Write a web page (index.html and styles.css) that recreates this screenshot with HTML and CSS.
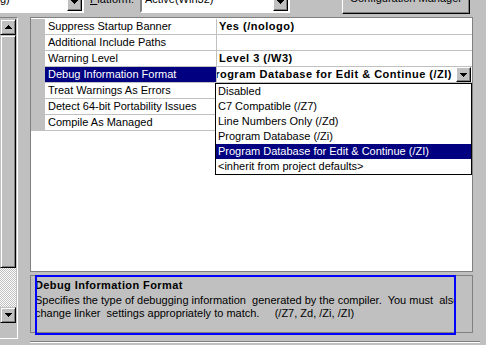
FILE: index.html
```html
<!DOCTYPE html>
<html lang="en">
<head>
    <meta charset="UTF-8">
    <title>C/C++ General Property Page</title>
    <link rel="stylesheet" href="styles.css">
</head>
<body>
    <div class="top">
        <div class="combo combo-cfg">
            <div class="field">Active(Debug)</div>
            <div class="dd-btn"><svg width="7" height="4"><path d="M0 0h7v1h-1v1h-1v1h-1v1h-1v-1h-1v-1h-1v-1h-1z"/></svg></div>
        </div>
        <label class="lbl"><u>P</u>latform:</label>
        <div class="combo combo-plat">
            <div class="field">Active(Win32)</div>
            <div class="dd-btn"><svg width="7" height="4"><path d="M0 0h7v1h-1v1h-1v1h-1v1h-1v-1h-1v-1h-1v-1h-1z"/></svg></div>
        </div>
        <button class="btn">Configuration Manager</button>
    </div>

    <div class="main">
        <div class="side">
            <div class="tree">
                <div class="vscroll">
                    <div class="sb-btn"><svg width="7" height="4"><path d="M3 0h1v1h1v1h1v1h1v1h-7v-1h1v-1h1v-1h1z"/></svg></div>
                    <div class="thumb"></div>
                    <div class="track"></div>
                    <div class="sb-btn"><svg width="7" height="4"><path d="M0 0h7v1h-1v1h-1v1h-1v1h-1v-1h-1v-1h-1v-1h-1z"/></svg></div>
                </div>
            </div>
        </div>

        <div class="content">
            <div class="grid">
                <div class="row">
                    <div class="margin"></div>
                    <div class="name">Suppress Startup Banner</div>
                    <div class="val">Yes (/nologo)</div>
                </div>
                <div class="row">
                    <div class="margin"></div>
                    <div class="name">Additional Include Paths</div>
                    <div class="val"></div>
                </div>
                <div class="row">
                    <div class="margin"></div>
                    <div class="name">Warning Level</div>
                    <div class="val">Level 3 (/W3)</div>
                </div>
                <div class="row selected">
                    <div class="margin"></div>
                    <div class="name">Debug Information Format</div>
                    <div class="val combo-cell">
                        <div class="cv-text"><span>Program Database for Edit &amp; Continue (/ZI)</span></div>
                        <div class="dd-btn small"><svg width="7" height="4"><path d="M0 0h7v1h-1v1h-1v1h-1v1h-1v-1h-1v-1h-1v-1h-1z"/></svg></div>
                    </div>
                </div>
                <div class="row">
                    <div class="margin"></div>
                    <div class="name">Treat Warnings As Errors</div>
                    <div class="val"></div>
                </div>
                <div class="row">
                    <div class="margin"></div>
                    <div class="name">Detect 64-bit Portability Issues</div>
                    <div class="val"></div>
                </div>
                <div class="row">
                    <div class="margin"></div>
                    <div class="name">Compile As Managed</div>
                    <div class="val"></div>
                </div>

                <ul class="drop-list">
                    <li>Disabled</li>
                    <li>C7 Compatible (/Z7)</li>
                    <li>Line Numbers Only (/Zd)</li>
                    <li>Program Database (/Zi)</li>
                    <li class="active">Program Database for Edit &amp; Continue (/ZI)</li>
                    <li>&lt;inherit from project defaults&gt;</li>
                </ul>
            </div>

            <div class="desc">
                <div class="desc-text">
                    <div class="desc-title">Debug Information Format</div>
                    <div class="desc-line">Specifies the type of debugging information  generated by the compiler.  You must  also</div>
                    <div class="desc-line">change linker  settings appropriately to match.     (/Z7, Zd, /Zi, /ZI)</div>
                </div>
                <div class="focus"></div>
            </div>

            <div class="sep"></div>
        </div>
    </div>
</body>
</html>
```

FILE: styles.css
```css
html, body {
    margin: 0;
    padding: 0;
    height: 345px;
    overflow: hidden;
}

body {
    background: #c0c0c0;
    color: #000;
    font-family: "Liberation Sans", Arial, sans-serif;
    font-size: 11px;
    line-height: 13px;
}

svg {
    display: block;
    shape-rendering: crispEdges;
}

/* top bar, mostly scrolled off */
.top {
    display: flex;
    height: 23px;
    margin-top: -9px;
}

.combo {
    display: flex;
    flex-shrink: 0;
    height: 22px;
    box-sizing: border-box;
    border: 2px solid;
    border-color: #808080 #fff #fff #808080;
    background: #fff;
}

.combo .field {
    flex: 1;
    min-width: 0;
    padding-left: 3px;
    white-space: nowrap;
    overflow: hidden;
}

.combo-cfg {
    margin-left: -65px;
    width: 149px;
}

.combo-plat {
    width: 150px;
}

.dd-btn {
    width: 15px;
    flex-shrink: 0;
    box-sizing: border-box;
    background: #c0c0c0;
    border: 1px solid;
    border-color: #fff #000 #000 #fff;
    box-shadow: inset -1px -1px #808080;
    display: flex;
    align-items: center;
    justify-content: center;
}

.lbl {
    flex-shrink: 0;
    margin-left: 6px;
    width: 50px;
    padding-top: 2px;
}

.btn {
    flex-shrink: 0;
    margin-left: 52px;
    width: 128px;
    height: 23px;
    padding: 0;
    box-sizing: border-box;
    background: #c0c0c0;
    border: 1px solid;
    border-color: #fff #000 #000 #fff;
    box-shadow: inset -1px -1px #808080;
    font: inherit;
    line-height: 13px;
    display: flex;
    justify-content: center;
    align-items: flex-start;
}

/* main area */
.main {
    display: flex;
    margin-top: 3px;
}

.side {
    width: 30px;
    flex-shrink: 0;
}

.tree {
    width: 18px;
    height: 322px;
    box-sizing: border-box;
    border-top: 1px solid #808080;
    border-right: 1px solid #fff;
    border-bottom: 1px solid #fff;
    padding-top: 1px;
}

.vscroll {
    width: 16px;
    display: flex;
    flex-direction: column;
}

.sb-btn {
    height: 16px;
    box-sizing: border-box;
    border: 1px solid;
    border-color: #c0c0c0 #000 #000 #c0c0c0;
    box-shadow: inset 1px 1px #fff, inset -1px -1px #808080;
    display: flex;
    align-items: center;
    justify-content: center;
}

.thumb {
    height: 233px;
    box-sizing: border-box;
    border: 1px solid;
    border-color: #c0c0c0 #000 #000 #c0c0c0;
    box-shadow: inset 1px 1px #fff, inset -1px -1px #808080;
}

.track {
    height: 39px;
    background: repeating-conic-gradient(#fff 0 25%, #c0c0c0 0 50%) 0 0 / 2px 2px;
}

.content {
    width: 443px;
    flex-shrink: 0;
}

/* property grid */
.grid {
    position: relative;
    height: 255px;
    box-sizing: border-box;
    border: 1px solid #808080;
    padding-top: 1px;
    background: #fff;
}

.row {
    display: flex;
    height: 16px;
    box-sizing: border-box;
    border-bottom: 1px solid #c0c0c0;
    line-height: 15px;
}

.row .margin {
    width: 14px;
    flex-shrink: 0;
    background: #c0c0c0;
}

.row .name {
    width: 172px;
    flex-shrink: 0;
    box-sizing: border-box;
    padding-left: 3px;
    border-right: 1px solid #c0c0c0;
    white-space: nowrap;
    overflow: hidden;
}

.row .val {
    flex: 1;
    min-width: 0;
    padding-left: 2px;
    font-weight: bold;
    letter-spacing: 0.5px;
    white-space: nowrap;
}

.row.selected .name {
    background: #000080;
    color: #fff;
}

.val.combo-cell {
    display: flex;
    padding-left: 0;
    padding-right: 1px;
}

.cv-text {
    flex: 1;
    min-width: 0;
    display: flex;
    justify-content: flex-end;
    overflow: hidden;
    padding-right: 4px;
}

.cv-text span {
    flex-shrink: 0;
}

.drop-list {
    position: absolute;
    left: 184px;
    top: 65px;
    width: 257px;
    margin: 0;
    padding: 0;
    list-style: none;
    box-sizing: border-box;
    border: 1px solid #000;
    background: #fff;
}

.drop-list li {
    height: 15px;
    line-height: 15px;
    padding-left: 2px;
    white-space: nowrap;
}

.drop-list li.active {
    background: #000080;
    color: #fff;
}

/* description pane */
.desc {
    position: relative;
    height: 58px;
    margin-top: 3px;
    box-sizing: border-box;
    border: 1px solid #808080;
    padding: 3px 0 0 4px;
}

.desc-text {
    width: 419px;
    overflow: hidden;
}

.desc-title {
    font-weight: bold;
    letter-spacing: 0.4px;
    margin-bottom: 2px;
    white-space: nowrap;
}

.desc-line {
    white-space: pre;
}

.focus {
    position: absolute;
    left: 4px;
    top: -1px;
    width: 421px;
    height: 60px;
    box-sizing: border-box;
    border: 2px solid #0000ff;
}

.sep {
    margin-top: 8px;
    margin-right: -7px;
    border-top: 1px solid #808080;
    border-bottom: 1px solid #fff;
}
```
